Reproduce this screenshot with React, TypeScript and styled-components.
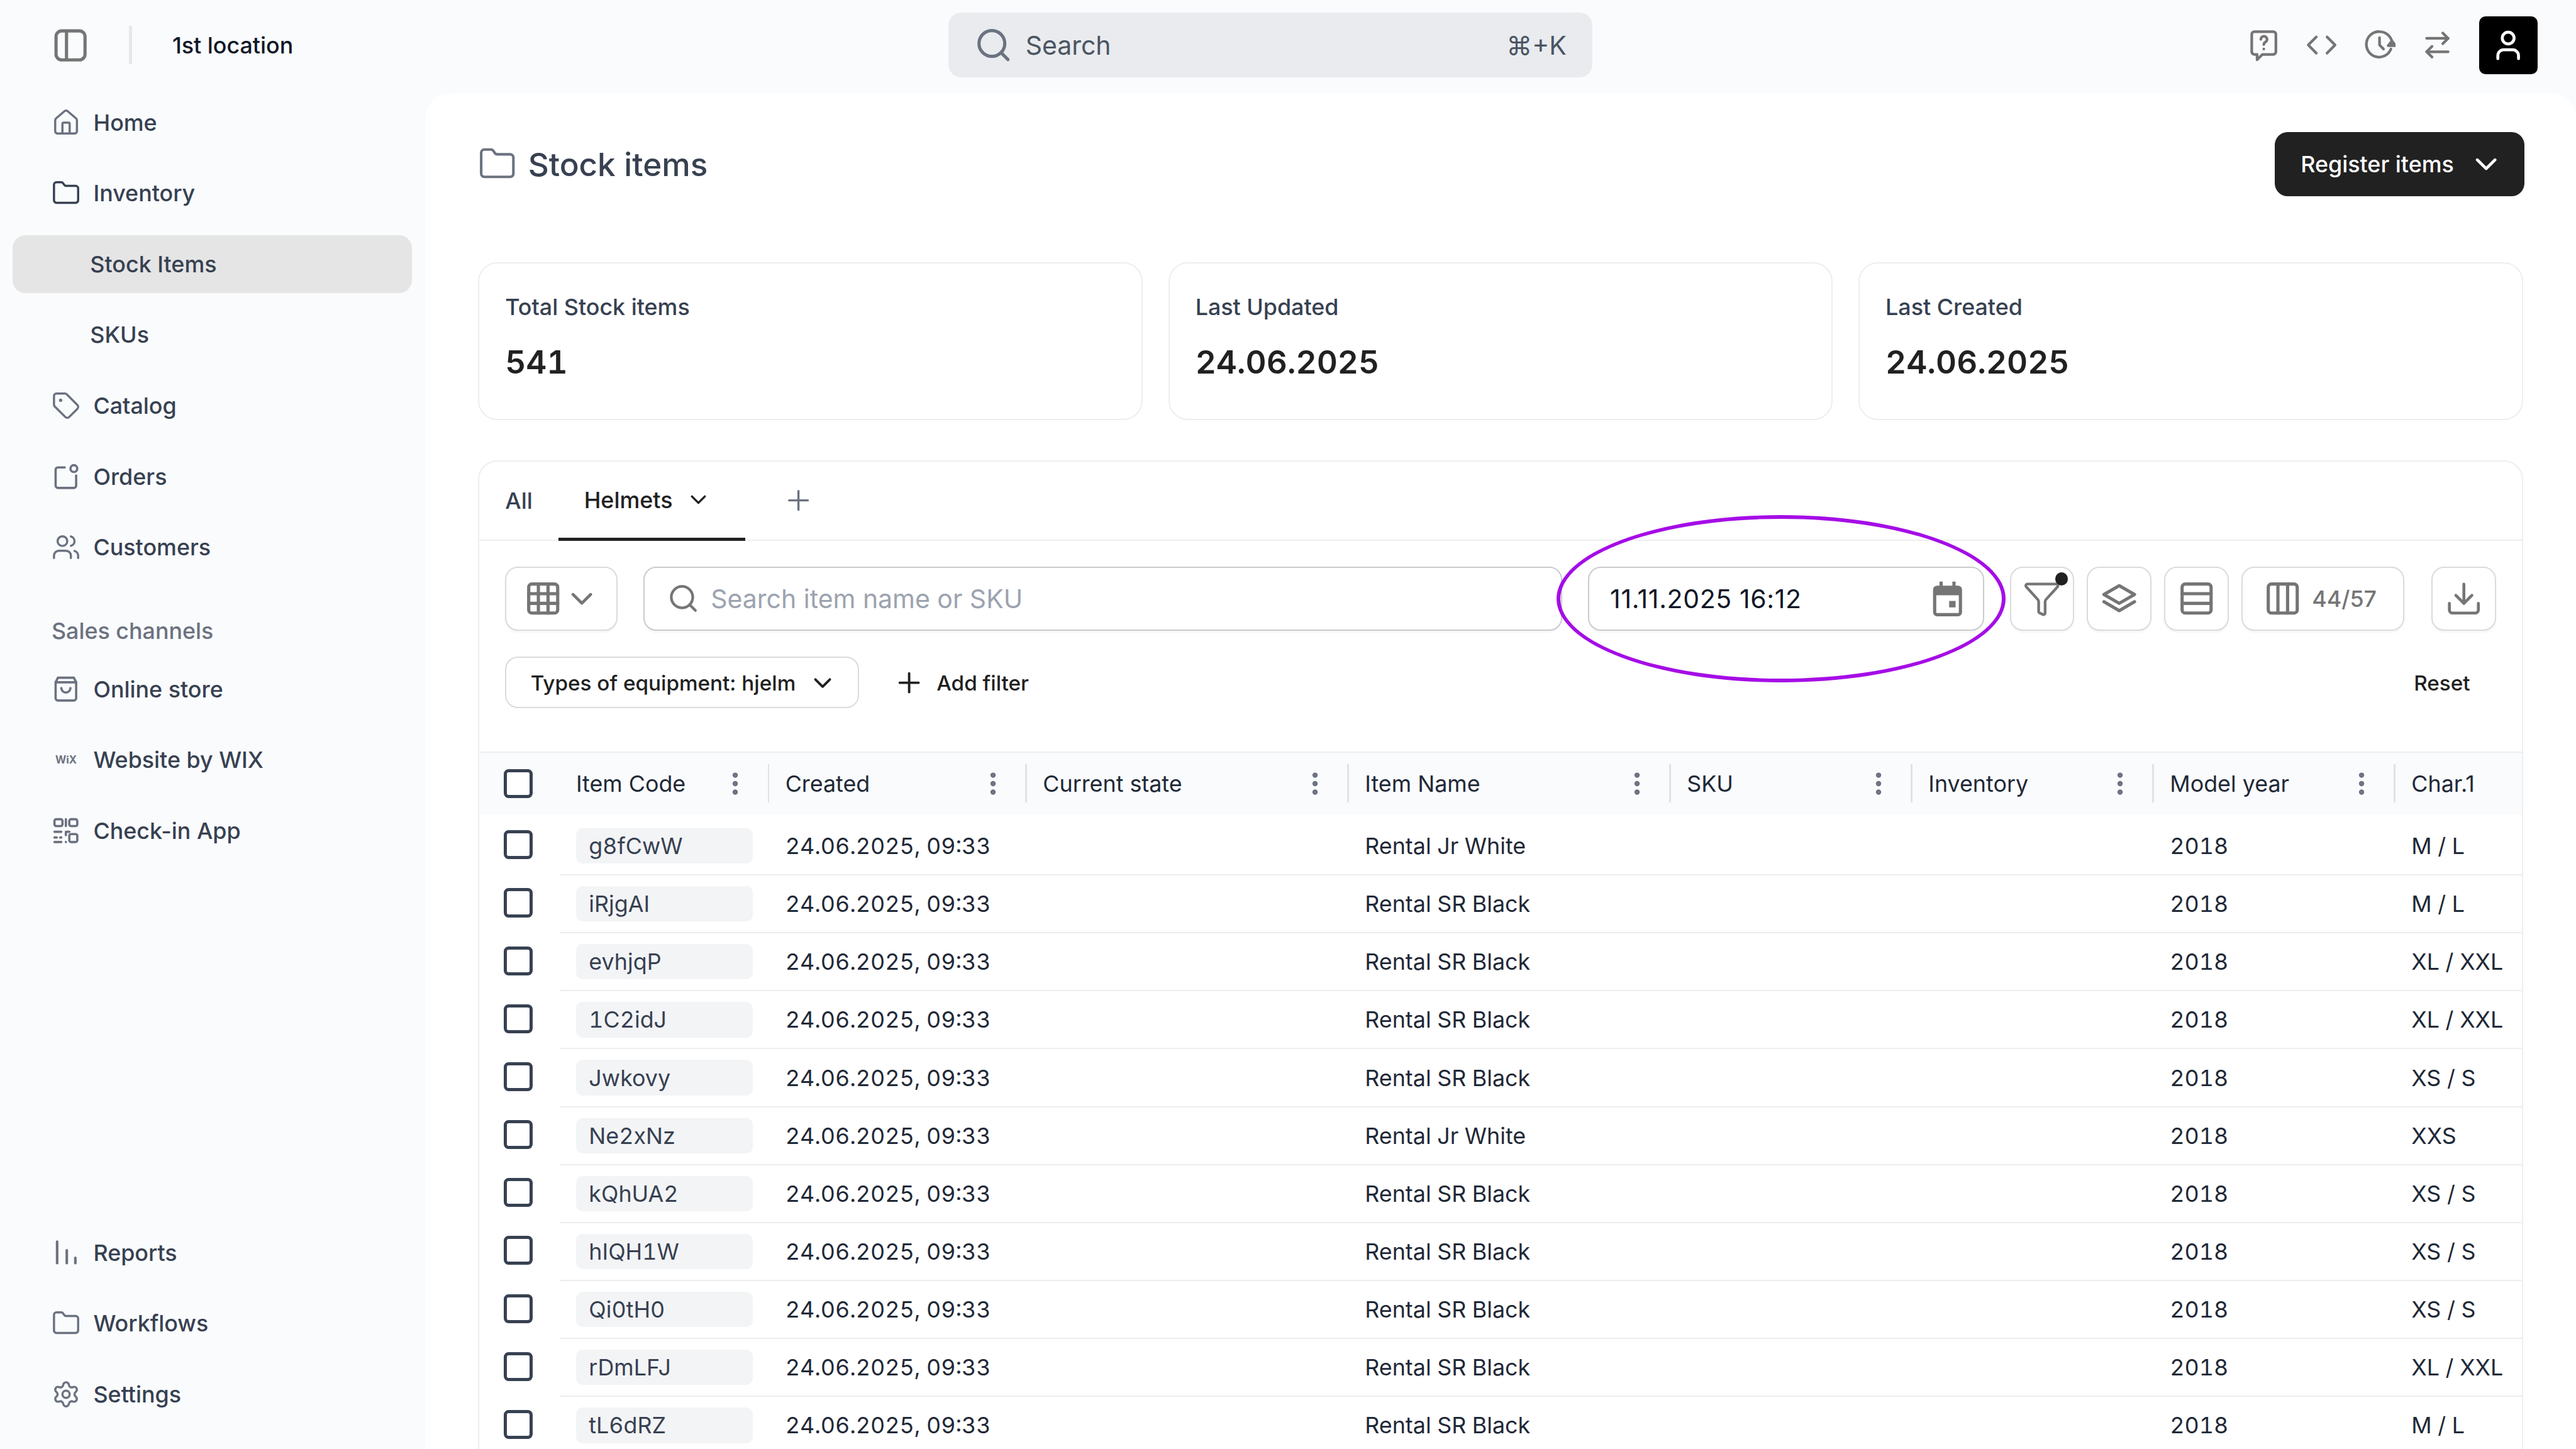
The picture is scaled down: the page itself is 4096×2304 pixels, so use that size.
import React from "react";
import styled, { createGlobalStyle } from "styled-components";
import {
  ArrowRightLeft,
  ChevronDown,
  Code,
  Columns3,
  Download,
  EllipsisVertical,
  Folder,
  Funnel,
  Grid3x3,
  House,
  Plus,
  Rows3,
  Search,
  Settings,
  Tag,
  User,
  Users,
} from "lucide-react";

const COLUMNS = "50px 130px 160px 200px 200px 150px 150px 150px 1fr";

const HEADERS = [
  "Item Code",
  "Created",
  "Current state",
  "Item Name",
  "SKU",
  "Inventory",
  "Model year",
  "Char.1",
];

const JR = "Rental Jr White";
const SR = "Rental SR Black";

const ITEMS = [
  ["g8fCwW", JR, "M / L"],
  ["iRjgAI", SR, "M / L"],
  ["evhjqP", SR, "XL / XXL"],
  ["1C2idJ", SR, "XL / XXL"],
  ["Jwkovy", SR, "XS / S"],
  ["Ne2xNz", JR, "XXS"],
  ["kQhUA2", SR, "XS / S"],
  ["hIQH1W", SR, "XS / S"],
  ["Qi0tH0", SR, "XS / S"],
  ["rDmLFJ", SR, "XL / XXL"],
  ["tL6dRZ", SR, "M / L"],
];

function SidebarToggleIcon() {
  return (
    <svg width="22" height="22" viewBox="0 0 22 22" fill="none" stroke="currentColor" strokeWidth="2">
      <rect x="2" y="2" width="18" height="18" rx="3.5" />
      <path d="M8.5 2v18" />
    </svg>
  );
}

function OrdersIcon() {
  return (
    <svg width="17" height="17" viewBox="0 0 24 24" fill="none" stroke="currentColor" strokeWidth="2" strokeLinecap="round">
      <path d="M11 4H5a2 2 0 0 0-2 2v14a2 2 0 0 0 2 2h14a2 2 0 0 0 2-2v-9" />
      <circle cx="19" cy="5" r="3" />
    </svg>
  );
}

function StoreIcon() {
  return (
    <svg width="17" height="17" viewBox="0 0 24 24" fill="none" stroke="currentColor" strokeWidth="2" strokeLinecap="round" strokeLinejoin="round">
      <path d="M5 2h14l2 4v14a2 2 0 0 1-2 2H5a2 2 0 0 1-2-2V6z" />
      <path d="M3 6h18" />
      <path d="M8 11a4 4 0 0 0 8 0" />
    </svg>
  );
}

function QrIcon() {
  return (
    <svg width="17" height="17" viewBox="0 0 24 24" fill="none" stroke="currentColor" strokeWidth="2" strokeLinecap="round">
      <rect x="2" y="2" width="7" height="6" rx="1.5" />
      <rect x="15" y="2" width="7" height="6" rx="1.5" />
      <rect x="15" y="15" width="7" height="7" rx="1.5" />
      <path d="M12 2v6M2 13h6M12 13h3M12 13v3M2 18h2M7 18h1M2 22h6M12 22h.01" />
    </svg>
  );
}

function BarsIcon() {
  return (
    <svg width="16" height="16" viewBox="0 0 24 24" fill="none" stroke="currentColor" strokeWidth="2.4" strokeLinecap="round">
      <path d="M4 2v20M13 10v12M21 17v5" />
    </svg>
  );
}

function HelpIcon() {
  return (
    <svg width="20" height="20" viewBox="0 0 24 24" fill="none" stroke="currentColor" strokeWidth="2" strokeLinecap="round" strokeLinejoin="round">
      <path d="M5 2h14a2 2 0 0 1 2 2v13a2 2 0 0 1-2 2h-8l-4 4v-4H5a2 2 0 0 1-2-2V4a2 2 0 0 1 2-2z" />
      <path d="M9.8 7.8a2.3 2.3 0 1 1 3.4 2c-.8.5-1.2 1-1.2 1.9" />
      <path d="M12 15h.01" />
    </svg>
  );
}

function ClockBackIcon() {
  return (
    <svg width="20" height="20" viewBox="0 0 24 24" fill="none" stroke="currentColor" strokeWidth="2" strokeLinecap="round" strokeLinejoin="round">
      <path d="M20.5 15a9.5 9.5 0 1 1-8.5-13 9.5 9.5 0 0 1 9.5 9.5" />
      <path d="M12 6.5V12l3 3" />
      <path d="M18.5 12.5h5.500L21.2 9z" fill="currentColor" />
    </svg>
  );
}

function LayersIcon() {
  return (
    <svg width="24" height="24" viewBox="0 0 24 24" fill="none" stroke="currentColor" strokeWidth="2" strokeLinecap="round" strokeLinejoin="round">
      <path d="M12 4l9.5 5.5L12 15 2.5 9.5z" />
      <path d="M2.5 14l9.5 5.5 9.5-5.5" />
    </svg>
  );
}

function CalendarIcon() {
  return (
    <svg width="24" height="24" viewBox="0 0 24 24" fill="currentColor">
      <path d="M7 1.5h2V4h6V1.5h2V4h1.5A2.5 2.5 0 0 1 21 6.5v14a2.5 2.5 0 0 1-2.5 2.5h-13A2.5 2.5 0 0 1 3 20.5v-14A2.5 2.5 0 0 1 5.5 4H7zM5 10v10.5c0 .3.2.5.5.5h13c.3 0 .5-.2.5-.5V10z" />
      <rect x="13" y="13.5" width="4" height="4" />
    </svg>
  );
}

function NavLink({
  icon,
  label,
  $strong,
}: {
  icon: React.ReactNode;
  label: string;
  $strong?: boolean;
}) {
  return (
    <NavItem>
      <NavIcon $strong={$strong}>{icon}</NavIcon>
      {label}
    </NavItem>
  );
}

function App() {
  return (
    <Page>
      <GlobalStyle />
      <TopBar>
        <TopLeft>
          <ToggleButton>
            <SidebarToggleIcon />
          </ToggleButton>
          <TopDivider />
          <LocationName>1st location</LocationName>
        </TopLeft>
        <GlobalSearch>
          <Search size={24} strokeWidth={2} />
          <GlobalSearchText>Search</GlobalSearchText>
          <Shortcut>⌘+K</Shortcut>
        </GlobalSearch>
        <TopRight>
          <TopIcon>
            <HelpIcon />
          </TopIcon>
          <TopIcon>
            <Code size={20} strokeWidth={2} />
          </TopIcon>
          <TopIcon>
            <ClockBackIcon />
          </TopIcon>
          <TopIcon>
            <ArrowRightLeft size={20} strokeWidth={2} />
          </TopIcon>
          <Avatar>
            <User size={22} strokeWidth={2} />
          </Avatar>
        </TopRight>
      </TopBar>

      <Body>
        <Sidebar>
          <NavGroup>
            <NavLink icon={<House size={18} strokeWidth={1.8} />} label="Home" />
            <NavLink icon={<Folder size={18} strokeWidth={1.8} />} label="Inventory" $strong />
            <SubItem $active>Stock Items</SubItem>
            <SubItem>SKUs</SubItem>
            <NavLink icon={<Tag size={18} strokeWidth={1.8} />} label="Catalog" />
            <NavLink icon={<OrdersIcon />} label="Orders" />
            <NavLink icon={<Users size={18} strokeWidth={1.8} />} label="Customers" />
            <NavHeading>Sales channels</NavHeading>
            <NavLink icon={<StoreIcon />} label="Online store" />
            <NavLink icon={<WixMark>WiX</WixMark>} label="Website by WIX" />
            <NavLink icon={<QrIcon />} label="Check-in App" />
          </NavGroup>
          <NavGroup>
            <NavLink icon={<BarsIcon />} label="Reports" />
            <NavLink icon={<Folder size={18} strokeWidth={1.8} />} label="Workflows" />
            <NavLink icon={<Settings size={18} strokeWidth={1.8} />} label="Settings" />
          </NavGroup>
        </Sidebar>

        <Main>
          <TitleRow>
            <TitleGroup>
              <Folder size={24} strokeWidth={1.6} />
              <Title>Stock items</Title>
            </TitleGroup>
            <PrimaryButton>
              Register items
              <ChevronDown size={22} strokeWidth={2} />
            </PrimaryButton>
          </TitleRow>

          <Stats>
            <StatCard>
              <StatLabel>Total Stock items</StatLabel>
              <StatValue>541</StatValue>
            </StatCard>
            <StatCard>
              <StatLabel>Last Updated</StatLabel>
              <StatValue>24.06.2025</StatValue>
            </StatCard>
            <StatCard>
              <StatLabel>Last Created</StatLabel>
              <StatValue>24.06.2025</StatValue>
            </StatCard>
          </Stats>

          <TableCard>
            <Tabs>
              <PlainTab>All</PlainTab>
              <ActiveTab>
                Helmets
                <ChevronDown size={16} strokeWidth={2} />
              </ActiveTab>
              <AddTab>
                <Plus size={20} strokeWidth={1.6} />
              </AddTab>
            </Tabs>

            <Toolbar>
              <ViewButton>
                <Grid3x3 size={24} strokeWidth={2} />
                <ChevronDown size={22} strokeWidth={2} />
              </ViewButton>
              <ItemSearch>
                <Search size={20} strokeWidth={2} />
                <Placeholder>Search item name or SKU</Placeholder>
              </ItemSearch>
              <DateField>
                <DateText>11.11.2025 16:12</DateText>
                <CalendarIcon />
              </DateField>
              <IconButton>
                <Funnel size={24} strokeWidth={1.7} />
                <FilterDot />
              </IconButton>
              <IconButton>
                <LayersIcon />
              </IconButton>
              <IconButton>
                <Rows3 size={24} strokeWidth={2} />
              </IconButton>
              <ColumnsButton>
                <Columns3 size={24} strokeWidth={2} />
                44/57
              </ColumnsButton>
              <DownloadButton>
                <Download size={24} strokeWidth={1.8} />
              </DownloadButton>
              <Annotation />
            </Toolbar>

            <FilterRow>
              <FilterChip>
                Types of equipment: hjelm
                <ChevronDown size={18} strokeWidth={2} />
              </FilterChip>
              <AddFilter>
                <Plus size={20} strokeWidth={1.8} />
                Add filter
              </AddFilter>
              <ResetLink>Reset</ResetLink>
            </FilterRow>

            <HeaderRow>
              <CheckCell>
                <CheckBox />
              </CheckCell>
              {HEADERS.map((name, i) => (
                <HeadCell key={name} $last={i === HEADERS.length - 1}>
                  {name}
                  {i < HEADERS.length - 1 && (
                    <DotsIcon>
                      <EllipsisVertical size={18} strokeWidth={2.4} />
                    </DotsIcon>
                  )}
                </HeadCell>
              ))}
            </HeaderRow>

            <Rows>
              {ITEMS.map(([code, name, char]) => (
                <DataRow key={code}>
                  <RowCheckCell>
                    <CheckBox />
                  </RowCheckCell>
                  <Cell>
                    <CodeChip>{code}</CodeChip>
                  </Cell>
                  <Cell>24.06.2025, 09:33</Cell>
                  <Cell />
                  <Cell>{name}</Cell>
                  <Cell />
                  <Cell />
                  <Cell>2018</Cell>
                  <Cell>{char}</Cell>
                </DataRow>
              ))}
            </Rows>
          </TableCard>
        </Main>
      </Body>
    </Page>
  );
}

const GlobalStyle = createGlobalStyle`
  html, body {
    margin: 0;
    padding: 0;
    background: #fafbfd;
    overflow: hidden;
  }
  * {
    box-sizing: border-box;
  }
  svg {
    flex-shrink: 0;
  }
`;

const Page = styled.div`
  zoom: 2.56;
  width: 1600px;
  height: 900px;
  overflow: hidden;
  display: flex;
  flex-direction: column;
  background: #fafbfd;
  font-family: Inter, "Liberation Sans", sans-serif;
  font-size: 14px;
  color: #374151;
`;

const TopBar = styled.header`
  flex: 0 0 58px;
  display: grid;
  grid-template-columns: 589px 400px 1fr;
  align-items: center;
  padding-bottom: 2px;
`;

const TopLeft = styled.div`
  display: flex;
  align-items: center;
  padding-left: 33px;
`;

const ToggleButton = styled.span`
  display: flex;
  color: #757575;
`;

const TopDivider = styled.span`
  width: 2px;
  height: 24px;
  margin: 0 25px 0 25px;
  background: #e5e7eb;
`;

const LocationName = styled.span`
  color: #111827;
  font-weight: 500;
`;

const GlobalSearch = styled.div`
  height: 40px;
  display: flex;
  align-items: center;
  gap: 8px;
  padding: 0 16px 0 16px;
  border-radius: 8px;
  background: #e9ebee;
  color: #6b7280;
`;

const GlobalSearchText = styled.span`
  flex: 1;
  font-size: 16px;
  color: #4b5563;
`;

const Shortcut = styled.span`
  font-size: 16px;
  color: #4b5563;
`;

const TopRight = styled.div`
  display: flex;
  align-items: center;
  justify-content: flex-end;
  padding-right: 24px;
  gap: 16px;
  color: #757575;
`;

const TopIcon = styled.span`
  display: flex;
`;

const Avatar = styled.span`
  width: 36px;
  height: 36px;
  display: flex;
  align-items: center;
  justify-content: center;
  border-radius: 4px;
  background: #000;
  color: #fff;
`;

const Body = styled.div`
  flex: 1;
  display: flex;
  min-height: 0;
`;

const Sidebar = styled.nav`
  flex: 0 0 264px;
  display: flex;
  flex-direction: column;
  justify-content: space-between;
  padding: 0 8px 16px;
`;

const NavGroup = styled.div`
  display: flex;
  flex-direction: column;
  gap: 8px;
`;

const NavItem = styled.div`
  height: 36px;
  display: flex;
  align-items: center;
  gap: 9px;
  padding-left: 25px;
  font-weight: 500;
  color: #374151;
`;

const NavIcon = styled.span<{ $strong?: boolean }>`
  flex: none;
  width: 16px;
  min-width: 0;
  display: flex;
  justify-content: center;
  color: ${(props) => (props.$strong ? "#374151" : "#6b7280")};
`;

const WixMark = styled.span`
  font-size: 6.5px;
  font-weight: 700;
  line-height: 16px;
`;

const SubItem = styled.div<{ $active?: boolean }>`
  height: 36px;
  display: flex;
  align-items: center;
  padding-left: 48px;
  border-radius: 8px;
  font-weight: 500;
  color: #374151;
  background: ${(props) => (props.$active ? "#e5e5e5" : "transparent")};
`;

const NavHeading = styled.div`
  margin-top: 16px;
  height: 20px;
  padding-left: 24px;
  display: flex;
  align-items: center;
  font-weight: 500;
  color: #6b7280;
`;

const Main = styled.main`
  flex: 1;
  min-width: 0;
  overflow: hidden;
  padding: 24px 33px 0 33px;
  border-radius: 16px 16px 0 0;
  background: #fff;
`;

const TitleRow = styled.div`
  height: 40px;
  display: flex;
  align-items: center;
  justify-content: space-between;
  margin-bottom: 41px;
`;

const TitleGroup = styled.div`
  display: flex;
  align-items: center;
  gap: 7px;
  color: #6b7280;
`;

const Title = styled.h1`
  margin: 0;
  font-size: 20px;
  font-weight: 500;
  color: #374151;
`;

const PrimaryButton = styled.div`
  width: 155px;
  height: 40px;
  margin-right: -1px;
  display: flex;
  align-items: center;
  justify-content: space-between;
  padding: 0 13px 0 16px;
  border-radius: 8px;
  background: #212121;
  color: #fff;
  font-weight: 500;
`;

const Stats = styled.section`
  display: grid;
  grid-template-columns: repeat(3, 1fr);
  gap: 16px;
  margin-bottom: 25px;
`;

const StatCard = styled.div`
  height: 98px;
  padding: 17px 16px 0;
  border: 1px solid #eeeeee;
  border-radius: 12px;
`;

const StatLabel = styled.div`
  line-height: 20px;
  font-weight: 500;
  color: #374151;
`;

const StatValue = styled.div`
  margin-top: 10px;
  font-size: 20px;
  line-height: 28px;
  font-weight: 600;
  font-variant-numeric: tabular-nums;
  color: #212121;
`;

const TableCard = styled.section`
  position: relative;
  border: 1px solid #eeeeee;
  border-radius: 12px 12px 0 0;
`;

const Tabs = styled.div`
  height: 49px;
  display: flex;
  align-items: stretch;
  padding-left: 16px;
  border-bottom: 1px solid #eeeeee;
`;

const PlainTab = styled.div`
  width: 33px;
  display: flex;
  align-items: center;
  font-weight: 500;
  color: #374151;
`;

const ActiveTab = styled.div`
  width: 116px;
  display: flex;
  align-items: center;
  gap: 8px;
  padding-left: 16px;
  border-bottom: 2px solid #212121;
  margin-bottom: -1px;
  font-weight: 500;
  color: #212121;
`;

const AddTab = styled.div`
  display: flex;
  align-items: center;
  margin-left: 23px;
  color: #6b7280;
`;

const Toolbar = styled.div`
  position: relative;
  display: flex;
  gap: 16px;
  padding: 16px 16px 0;
`;

const OutlineBox = styled.div`
  height: 40px;
  display: flex;
  align-items: center;
  border: 1px solid #d9dbdf;
  border-radius: 8px;
  background: #fff;
  color: #757575;
  box-shadow: 0 1px 1px rgba(0, 0, 0, 0.04);
`;

const ViewButton = styled(OutlineBox)`
  flex: 0 0 70px;
  gap: 1px;
  padding-left: 11px;
`;

const ItemSearch = styled(OutlineBox)`
  flex: 1;
  gap: 7px;
  padding-left: 14px;
  border-color: #c9cccf;
`;

const Placeholder = styled.span`
  font-size: 16px;
  color: #9ca3af;
`;

const DateField = styled(OutlineBox)`
  flex: 0 0 246px;
  justify-content: space-between;
  padding: 0 10px 0 13px;
  border-color: #c9cccf;
`;

const DateText = styled.span`
  font-size: 16px;
  letter-spacing: 0.25px;
  color: #111827;
`;

const IconButton = styled(OutlineBox)`
  position: relative;
  flex: 0 0 40px;
  justify-content: center;
  margin-right: -8px;
`;

const FilterDot = styled.span`
  position: absolute;
  top: 3px;
  right: 3px;
  width: 8px;
  height: 8px;
  border-radius: 50%;
  background: #212121;
`;

const ColumnsButton = styled(OutlineBox)`
  flex: 0 0 101px;
  gap: 6px;
  padding-left: 13px;
  font-weight: 500;
`;

const DownloadButton = styled(OutlineBox)`
  flex: 0 0 40px;
  justify-content: center;
  margin-left: 1px;
`;

const Annotation = styled.div`
  position: absolute;
  left: 669px;
  top: -16px;
  width: 279px;
  height: 104px;
  border: 2.4px solid #a50de6;
  border-radius: 50%;
  pointer-events: none;
`;

const FilterRow = styled.div`
  display: flex;
  align-items: center;
  height: 32px;
  margin: 16px 0 27px;
  padding: 0 32px 0 16px;
  font-size: 13px;
  font-weight: 500;
  color: #212121;
`;

const FilterChip = styled.div`
  width: 220px;
  height: 32px;
  display: flex;
  align-items: center;
  justify-content: space-between;
  padding: 1px 13px 0 15px;
  border: 1px solid #d9dbdf;
  border-radius: 8px;
  white-space: nowrap;
`;

const AddFilter = styled.div`
  display: flex;
  align-items: center;
  gap: 7px;
  margin-left: 21px;
  padding-top: 1px;
`;

const ResetLink = styled.div`
  margin-left: auto;
  padding-top: 1px;
`;

const HeaderRow = styled.div`
  display: grid;
  grid-template-columns: ${COLUMNS};
  height: 39px;
  border-top: 1px solid #eeeeee;
  background: #fafbfc;
`;

const Rows = styled.div`
  padding-top: 2px;
  font-variant-numeric: tabular-nums;
`;

const DataRow = styled.div`
  display: grid;
  grid-template-columns: ${COLUMNS};
  height: 36px;
`;

const CheckCell = styled.div`
  display: flex;
  align-items: center;
  padding-left: 15px;
`;

const RowCheckCell = styled(CheckCell)`
  padding-bottom: 2px;
`;

const CheckBox = styled.span`
  width: 18px;
  height: 18px;
  border: 2px solid #374151;
  border-radius: 3px;
  background: #fff;
`;

const HeadCell = styled.div<{ $last?: boolean }>`
  position: relative;
  display: flex;
  align-items: center;
  justify-content: space-between;
  padding: 0 12px 0 10px;
  color: #1f2937;
  &::after {
    content: "";
    display: ${(props) => (props.$last ? "none" : "block")};
    position: absolute;
    right: 0;
    top: 7px;
    width: 1px;
    height: 24px;
    background: #e0e2e6;
  }
`;

const DotsIcon = styled.span`
  display: flex;
  color: #6b7280;
`;

const Cell = styled.div`
  display: flex;
  align-items: center;
  padding-left: 10px;
  border-bottom: 1px solid #eeeeee;
  color: #1f2937;
`;

const CodeChip = styled.span`
  width: 110px;
  height: 22px;
  display: flex;
  align-items: center;
  padding-left: 8px;
  border-radius: 4px;
  background: #f3f4f6;
  color: #374151;
`;

export default App;
